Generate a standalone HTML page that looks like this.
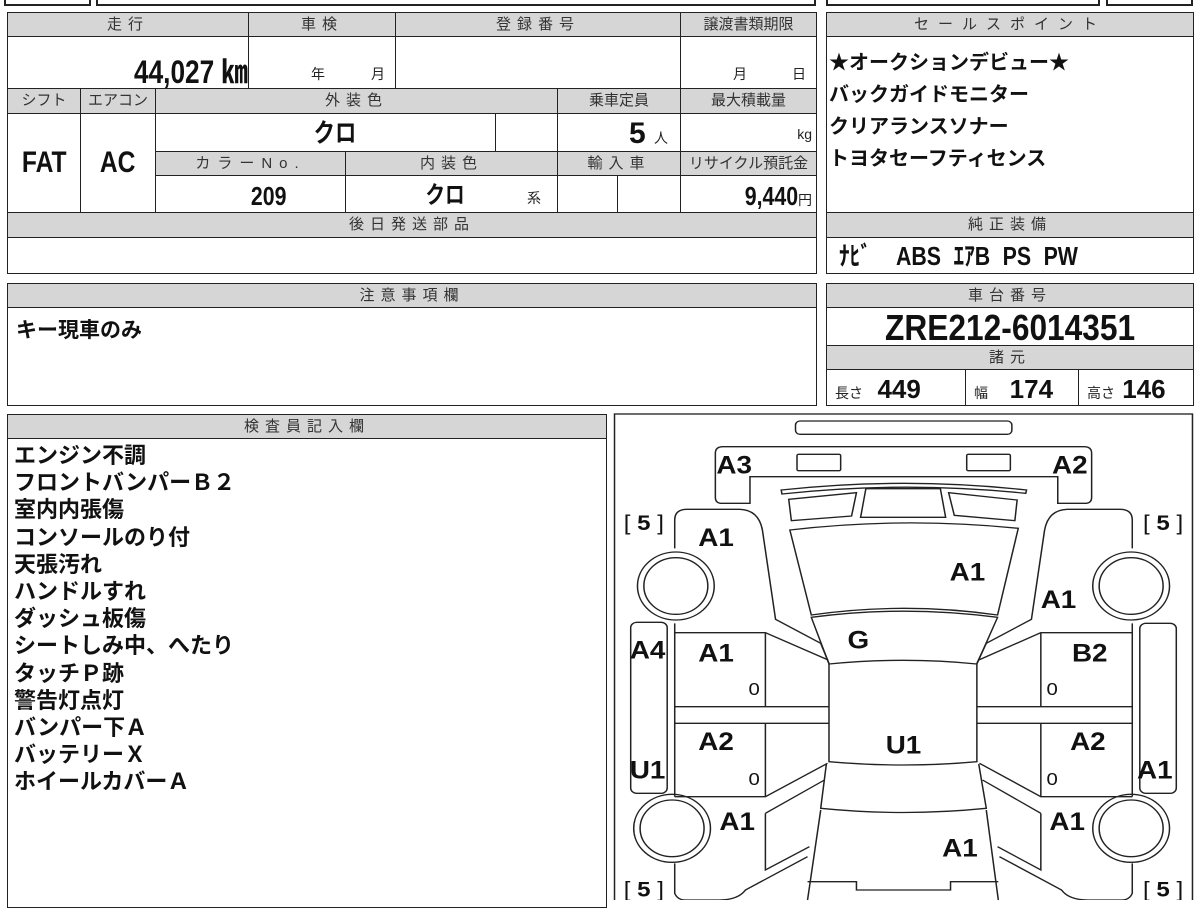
<!DOCTYPE html>
<html><head><meta charset="utf-8">
<style>
*{margin:0;padding:0;box-sizing:border-box}
body{width:1200px;height:900px;background:#fff;position:relative;overflow:hidden;font-family:"Liberation Sans","Noto Sans CJK JP",sans-serif;color:#111}
.b{position:absolute;border:2px solid #222}
.h{position:absolute;background:#d6d6d6;border:1px solid #222;font-size:15px;letter-spacing:6px;text-align:center;line-height:23px;color:#333;white-space:nowrap;overflow:hidden}
.c{position:absolute;border:1px solid #222;white-space:nowrap;overflow:hidden}
.n{font-family:"Liberation Sans Narrow","Liberation Sans","Noto Sans CJK JP",sans-serif;font-weight:bold;color:#111}
.j{font-family:"Noto Sans CJK JP",sans-serif;font-weight:bold;font-size:21px;color:#111}
.s{font-size:14px;color:#222;font-weight:normal}
.t{position:absolute;font-size:14px;color:#222}
.x{display:inline-block;transform:scaleX(.82)}
</style></head><body>
<!-- top strip -->
<div class="b" style="left:4px;top:-10px;width:87px;height:16px"></div>
<div class="b" style="left:96px;top:-10px;width:720px;height:16px"></div>
<div class="b" style="left:826px;top:-10px;width:274px;height:16px"></div>
<div class="b" style="left:1106px;top:-10px;width:87px;height:16px"></div>

<!-- main left table -->
<div class="h" style="left:7px;top:12px;width:242px;height:25px">走行</div>
<div class="h" style="left:248px;top:12px;width:148px;height:25px">車検</div>
<div class="h" style="left:395px;top:12px;width:286px;height:25px">登録番号</div>
<div class="h" style="left:680px;top:12px;width:137px;height:25px;letter-spacing:0">譲渡書類期限</div>
<div class="c n" style="left:7px;top:36px;width:242px;height:53px;font-size:32px;text-align:right;padding:10px 0 0 0"><span class="x" style="transform-origin:right">44,027 ㎞</span></div>
<div class="c" style="left:248px;top:36px;width:148px;height:53px"></div>
<span class="t" style="left:311px;top:64px">年</span><span class="t" style="left:371px;top:64px">月</span>
<div class="c" style="left:395px;top:36px;width:286px;height:53px"></div>
<div class="c" style="left:680px;top:36px;width:137px;height:53px"></div>
<span class="t" style="left:733px;top:64px">月</span><span class="t" style="left:792px;top:64px">日</span>

<div class="h" style="left:7px;top:88px;width:74px;height:26px;letter-spacing:0">シフト</div>
<div class="h" style="left:80px;top:88px;width:76px;height:26px;letter-spacing:0">エアコン</div>
<div class="h" style="left:155px;top:88px;width:403px;height:26px">外装色</div>
<div class="h" style="left:557px;top:88px;width:124px;height:26px;letter-spacing:0">乗車定員</div>
<div class="h" style="left:680px;top:88px;width:137px;height:26px;letter-spacing:0">最大積載量</div>
<div class="c n" style="left:7px;top:113px;width:74px;height:100px;font-size:30px;text-align:center;line-height:98px"><span class="x">FAT</span></div>
<div class="c n" style="left:80px;top:113px;width:76px;height:100px;font-size:30px;text-align:center;line-height:98px"><span class="x">AC</span></div>
<div class="c n" style="left:155px;top:113px;width:341px;height:39px;font-size:26px;text-align:center;line-height:38px;padding-left:20px"><span class="x">クロ</span></div>
<div class="c" style="left:495px;top:113px;width:63px;height:39px"></div>
<div class="c n" style="left:557px;top:113px;width:124px;height:39px;font-size:30px;text-align:right;line-height:40px;padding-right:12px">5 <span class="s">人</span></div>
<div class="c s" style="left:680px;top:113px;width:137px;height:39px;text-align:right;padding:12px 4px 0 0">kg</div>
<div class="h" style="left:155px;top:151px;width:191px;height:25px;letter-spacing:7px">カラーNo.</div>
<div class="h" style="left:345px;top:151px;width:213px;height:25px">内装色</div>
<div class="h" style="left:557px;top:151px;width:124px;height:25px">輸入車</div>
<div class="h" style="left:680px;top:151px;width:137px;height:25px;letter-spacing:0">リサイクル預託金</div>
<div class="c n" style="left:155px;top:175px;width:191px;height:38px;font-size:26px;text-align:center;line-height:40px;padding-left:36px"><span class="x">209</span></div>
<div class="c n" style="left:345px;top:175px;width:213px;height:38px;font-size:24px;line-height:40px;padding-left:75px"><span class="x">クロ</span><span class="s" style="margin-left:58px">系</span></div>
<div class="c" style="left:557px;top:175px;width:61px;height:38px"></div>
<div class="c" style="left:617px;top:175px;width:64px;height:38px"></div>
<div class="c n" style="left:680px;top:175px;width:137px;height:38px;font-size:26px;text-align:right;line-height:40px;padding-right:4px"><span class="x" style="transform-origin:right">9,440</span><span class="s">円</span></div>
<div class="h" style="left:7px;top:212px;width:810px;height:26px">後日発送部品</div>
<div class="c" style="left:7px;top:237px;width:810px;height:37px"></div>

<!-- sales point -->
<div class="h" style="left:826px;top:12px;width:368px;height:25px;letter-spacing:9px">セールスポイント</div>
<div class="c j" style="left:826px;top:36px;width:368px;height:177px;line-height:32px;padding:8px 0 0 2px;font-size:20px">★オークションデビュー★<br>バックガイドモニター<br>クリアランスソナー<br>トヨタセーフティセンス</div>
<div class="h" style="left:826px;top:212px;width:368px;height:26px">純正装備</div>
<div class="c n" style="left:826px;top:237px;width:368px;height:37px;font-size:26px;line-height:36px;padding-left:12px"><span class="x" style="transform-origin:left;word-spacing:8px">ﾅﾋﾞ&nbsp; ABS ｴｱB PS PW</span></div>

<!-- notes -->
<div class="h" style="left:7px;top:283px;width:810px;height:25px">注意事項欄</div>
<div class="c j" style="left:7px;top:307px;width:810px;height:99px;padding:6px 0 0 8px">キー現車のみ</div>

<div class="h" style="left:826px;top:283px;width:368px;height:25px">車台番号</div>
<div class="c n" style="left:826px;top:307px;width:368px;height:39px;font-size:36px;text-align:center;line-height:40px"><span class="x" style="transform:scaleX(.88)">ZRE212-6014351</span></div>
<div class="h" style="left:826px;top:345px;width:368px;height:25px">諸元</div>
<div class="c n" style="left:826px;top:369px;width:140px;height:37px;font-size:26px;line-height:38px;padding-left:8px"><span class="s">長さ</span>&nbsp; 449</div>
<div class="c n" style="left:965px;top:369px;width:114px;height:37px;font-size:26px;line-height:38px;padding-left:8px"><span class="s">幅</span>&nbsp;&nbsp; 174</div>
<div class="c n" style="left:1078px;top:369px;width:116px;height:37px;font-size:26px;line-height:38px;padding-left:8px"><span class="s">高さ</span> 146</div>

<!-- inspector -->
<div class="h" style="left:7px;top:414px;width:600px;height:25px">検査員記入欄</div>
<div class="c j" style="left:7px;top:438px;width:600px;height:470px;padding:2px 0 0 6px;line-height:27.2px;font-size:22px">エンジン不調<br>フロントバンパーＢ２<br>室内内張傷<br>コンソールのり付<br>天張汚れ<br>ハンドルすれ<br>ダッシュ板傷<br>シートしみ中、へたり<br>タッチＰ跡<br>警告灯点灯<br>バンパー下Ａ<br>バッテリーＸ<br>ホイールカバーＡ</div>

<!-- diagram -->
<svg style="position:absolute;left:610px;top:410px" width="590" height="490" viewBox="0 0 1568 1470" preserveAspectRatio="none">
<g fill="none" stroke="#222" stroke-width="4">
<rect x="12" y="12" width="1536" height="1500"/>
<rect x="493" y="33" width="575" height="40" rx="12"/>
<path d="M300,110 H1260 Q1280,110 1280,130 V262 Q1280,280 1262,280 H1190 V200 H372 V280 H298 Q280,280 280,262 V130 Q280,110 300,110 Z"/>
<rect x="497" y="133" width="116" height="49" rx="4"/>
<rect x="948" y="133" width="116" height="49" rx="4"/>
<path d="M455,240 Q780,200 1107,240 L1105,250 Q780,212 457,252 Z"/>
<path d="M475,268 L655,248 L642,318 L482,332 Z"/>
<path d="M900,248 L1082,270 L1076,332 L915,316 Z"/>
<path d="M680,236 L878,236 L892,322 L666,322 Z"/>
<path d="M478,360 Q780,320 1085,355 L1030,615 Q780,575 535,615 Z"/>
<path d="M535,622 Q780,585 1030,622 L975,762 Q780,740 582,762 Z"/>
<path d="M582,762 L582,1055 Q780,1075 975,1055 L975,762"/>
<path d="M575,1062 L560,1195 Q780,1220 1000,1195 L980,1062"/>
<path d="M560,1200 L525,1470 M1000,1200 L1032,1470"/>
<path d="M525,1415 H655 V1440 H905 V1415 H1032"/>
<path d="M172,415 V330 Q172,298 205,298 H345 Q395,300 405,360 L440,628 L560,700 L582,760"/>
<path d="M172,640 V668 H413 L580,750"/>
<path d="M172,668 V1160 M413,668 V890 M172,890 H582 M172,940 H582 M413,940 V1160 M172,1160 H413 L578,1060"/>
<path d="M413,1210 L570,1110 M413,1210 V1380 L530,1310 M172,1360 V1450 Q180,1470 200,1470 H290 Q340,1470 360,1440 L525,1340"/>
<rect x="55" y="637" width="97" height="513" rx="16"/>
<path d="M1388,415 V330 Q1388,298 1355,298 H1215 Q1165,300 1155,360 L1120,628 L1000,700 L975,760"/>
<path d="M1388,640 V668 H1145 L980,750"/>
<path d="M1388,668 V1160 M1145,668 V890 M1388,890 H975 M1388,940 H975 M1145,940 V1160 M1388,1160 H1145 L982,1060"/>
<path d="M1145,1210 L990,1110 M1145,1210 V1380 L1030,1310 M1388,1360 V1450 Q1380,1470 1360,1470 H1270 Q1220,1470 1200,1440 L1035,1340"/>
<rect x="1408" y="640" width="97" height="510" rx="16"/>
<circle cx="175" cy="528" r="102"/><circle cx="175" cy="528" r="85"/>
<circle cx="1385" cy="528" r="102"/><circle cx="1385" cy="528" r="85"/>
<circle cx="165" cy="1255" r="102"/><circle cx="165" cy="1255" r="85"/>
<circle cx="1385" cy="1255" r="102"/><circle cx="1385" cy="1255" r="85"/>
</g>
<g font-family="Liberation Sans Narrow, Liberation Sans, sans-serif" font-weight="bold" font-size="74" fill="#111" text-anchor="middle">
<text x="330" y="190">A3</text><text x="1222" y="190">A2</text>
<text x="282" y="408">A1</text><text x="950" y="512">A1</text><text x="1192" y="594">A1</text>
<text x="660" y="715">G</text><text x="100" y="745">A4</text><text x="282" y="755">A1</text><text x="1275" y="755">B2</text>
<text x="282" y="1020">A2</text><text x="780" y="1030">U1</text><text x="1270" y="1020">A2</text>
<text x="100" y="1105">U1</text><text x="1448" y="1105">A1</text>
<text x="338" y="1260">A1</text><text x="1215" y="1260">A1</text><text x="930" y="1340">A1</text>
<g font-size="54" font-weight="normal"><text x="383" y="855">0</text><text x="1175" y="855">0</text><text x="383" y="1125">0</text><text x="1175" y="1125">0</text></g>
<g font-size="64" font-weight="normal"><text x="90" y="360">[ <tspan font-weight="bold">5</tspan> ]</text><text x="1470" y="360">[ <tspan font-weight="bold">5</tspan> ]</text>
<text x="90" y="1460">[ <tspan font-weight="bold">5</tspan> ]</text><text x="1470" y="1460">[ <tspan font-weight="bold">5</tspan> ]</text></g>
</g>
</svg>
</body></html>
